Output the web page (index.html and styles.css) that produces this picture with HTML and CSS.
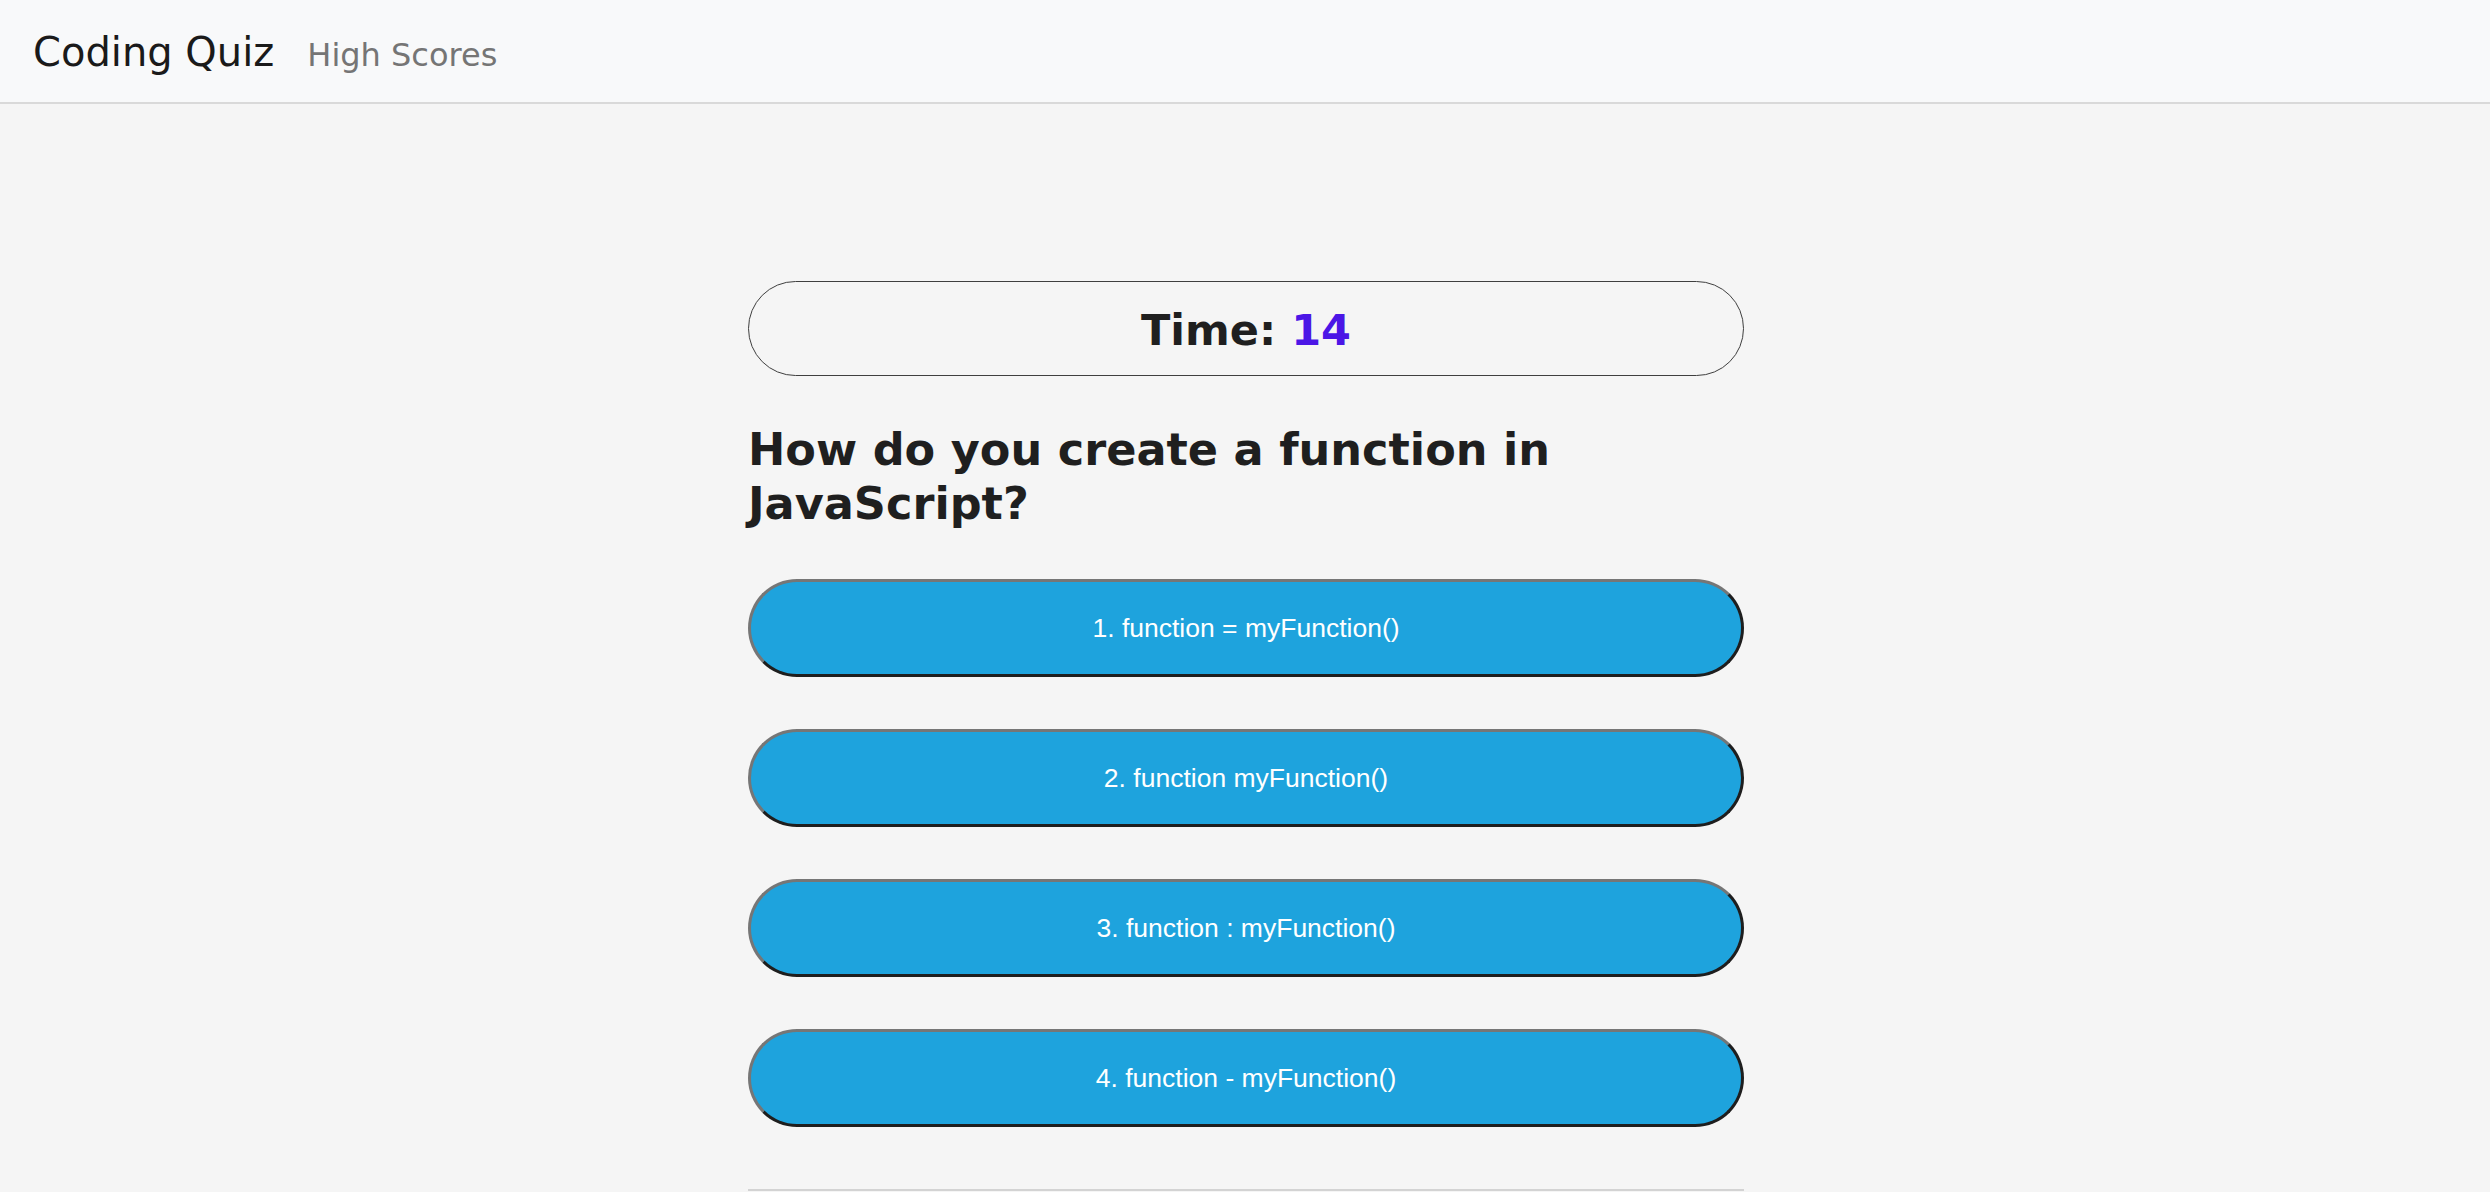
FILE: index.html
```html
<!DOCTYPE html>
<html lang="en">
<head>
<meta charset="utf-8">
<title>Coding Quiz</title>
<link rel="stylesheet" href="styles.css">
</head>
<body>
<nav class="navbar">
  <a class="brand" href="#">Coding Quiz</a>
  <a class="nav-link" href="#">High Scores</a>
</nav>
<main class="quiz">
  <div class="timer">Time: <span class="time-left">14</span></div>
  <h2 class="question">How do you create a function in JavaScript?</h2>
  <div class="choices">
    <button class="choice">1. function = myFunction()</button>
    <button class="choice">2. function myFunction()</button>
    <button class="choice">3. function : myFunction()</button>
    <button class="choice">4. function - myFunction()</button>
  </div>
  <div class="divider"></div>
</main>
</body>
</html>
```

FILE: styles.css
```css
html, body {
  margin: 0;
  padding: 0;
}
body {
  background: #f5f5f5;
  font-family: "DejaVu Sans", Verdana, sans-serif;
  color: #1f1f1f;
  overflow: hidden;
}
.navbar {
  display: flex;
  align-items: baseline;
  height: 74px;
  padding: 28px 0 0 33px;
  background: #f8f9fa;
  border-bottom: 2px solid #d9d9d9;
}
.brand {
  font-size: 40px;
  line-height: 48px;
  color: #1a1a1a;
  text-decoration: none;
  margin-right: 33px;
}
.nav-link {
  font-size: 32px;
  line-height: 48px;
  color: #757575;
  text-decoration: none;
}
.quiz {
  width: 996px;
  margin: 177px 0 0 calc(50% - 497px);
}
.timer {
  box-sizing: border-box;
  height: 95px;
  border: 1px solid #3f3f3f;
  border-radius: 48px;
  text-align: center;
  font-size: 43px;
  font-weight: bold;
  line-height: 93px;
  padding-top: 2px;
  color: #1f1f1f;
}
.time-left {
  color: #4b16e6;
}
.question {
  margin: 47px 0 48px;
  font-size: 44.6px;
  line-height: 54px;
  font-weight: bold;
  color: #1f1f1f;
}
.choices {
  display: flex;
  flex-direction: column;
  gap: 52px;
}
.choice {
  display: block;
  width: 100%;
  height: 98px;
  box-sizing: border-box;
  background: #1ea3dd;
  color: #ffffff;
  font-family: "Liberation Sans", Arial, sans-serif;
  font-size: 26.5px;
  border-width: 3px;
  border-style: solid;
  border-color: #767676 #1e1e1e #1e1e1e #767676;
  border-radius: 49px;
  padding: 0;
  cursor: pointer;
}
.divider {
  margin-top: 62px;
  border-top: 2px solid #d3d3d3;
}
```
